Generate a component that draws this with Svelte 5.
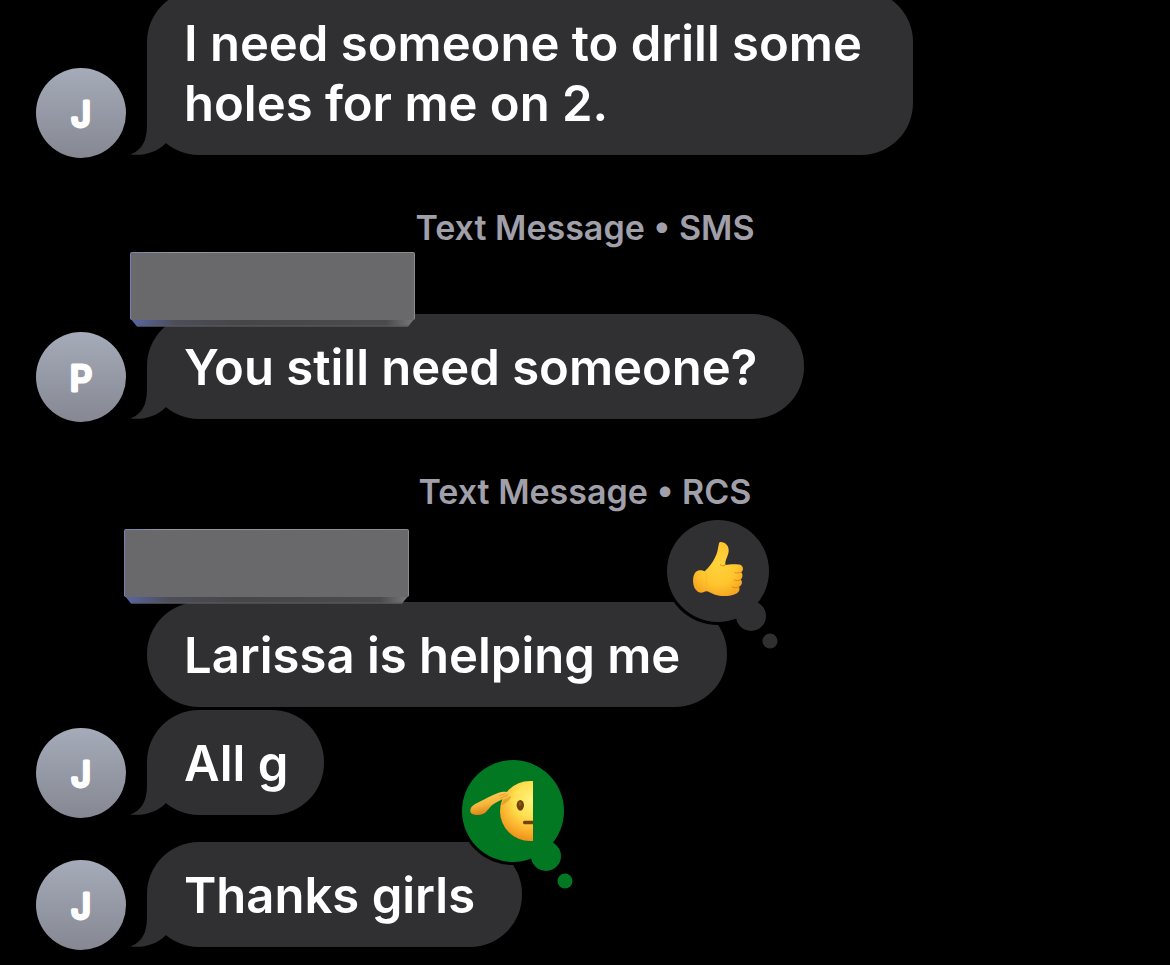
<script lang="ts">
    type Reaction = 'like' | 'salute';
    type Message = {
        text: string;
        initial?: string;
        channel?: string;
        hidden?: 'near' | 'far';
        reaction?: Reaction;
        follows?: boolean;
        short?: boolean;
    };

    const messages: Message[] = [
        { text: "I need someone to drill some holes for me on 2.", initial: "J" },
        { text: "You still need someone?", initial: "P", channel: "SMS", hidden: "near" },
        { text: "Larissa is helping me", channel: "RCS", hidden: "far", reaction: "like" },
        { text: "All g", initial: "J", follows: true, short: true },
        { text: "Thanks girls", initial: "J", reaction: "salute" },
    ];
</script>

<main>
    {#each messages as message}
    {#if message.channel}
    <h2>Text Message • {message.channel}</h2>
    {/if}
    {#if message.hidden}
    <div class="sender {message.hidden}">
        <svg class="block" width="286" height="76" viewBox="0 0 286 76" aria-hidden="true">
            <defs>
                <linearGradient id="bevel-{message.hidden}">
                    <stop offset="0" stop-color="#5967a8" />
                    <stop offset=".16" stop-color="#4c4d58" />
                    <stop offset=".4" stop-color="#464648" />
                    <stop offset=".9" stop-color="#4b4b4d" />
                    <stop offset="1" stop-color="#7a7a7c" />
                </linearGradient>
                <linearGradient id="edge-{message.hidden}">
                    <stop offset="0" stop-color="#7681b6" />
                    <stop offset=".15" stop-color="#99999c" />
                    <stop offset="1" stop-color="#8b8b8d" />
                </linearGradient>
            </defs>
            <path d="M0 66H285L278 74.500H7Z" fill="url(#bevel-{message.hidden})" />
            <rect x="0" y="0" width="285" height="68" rx="2" fill="url(#edge-{message.hidden})" />
            <rect x="1" y="1" width="283" height="67" rx="1" fill="#69696b" />
            <path d="M7 74H278" stroke="#5c5c60" stroke-width="1" />
        </svg>
    </div>
    {/if}
    <div class="row" class:follows={message.follows}>
        <div class="who">
            {#if message.initial}
            <svg class="avatar" width="90" height="90" viewBox="0 0 90 90">
                <defs>
                    <linearGradient id="avatar" x2="0" y2="1">
                        <stop offset="0" stop-color="#a6abb9" />
                        <stop offset="1" stop-color="#858892" />
                    </linearGradient>
                </defs>
                <circle cx="45" cy="45" r="45" fill="url(#avatar)" />
                <text x="45" y="59" text-anchor="middle">{message.initial}</text>
            </svg>
            {/if}
        </div>
        <div class="bubble" class:short={message.short}>
            {#if message.initial}
            <svg class="tail" width="70" height="50" viewBox="0 0 70 50" aria-hidden="true">
                <path d="M17 0V20C17 37 11 46 0 49.5C13 51 26 48 36 38L70 30V0Z" />
            </svg>
            {/if}
            <p>{message.text}</p>
            {#if message.reaction}
            <svg class="reaction {message.reaction}" width="124" height="140" viewBox="0 0 124 140" role="img" aria-label={message.reaction}>
                <circle class="ring" cx="59" cy="56" r="54" />
                <circle cx="59" cy="56" r="51" />
                <circle cx="92" cy="101" r="15" />
                <circle cx="111" cy="126" r="7.5" />
                {#if message.reaction === 'like'}
                <g transform="translate(-10 -5) scale(.3333)">
                    <defs>
                        <radialGradient id="hand" cx=".5" cy=".4" r=".65">
                            <stop offset="0" stop-color="#ffd43c" />
                            <stop offset=".6" stop-color="#ffc52e" />
                            <stop offset="1" stop-color="#f6a21f" />
                        </radialGradient>
                    </defs>
                    <path fill="url(#hand)" d="M214 96C228 95 241 107 239 124C238 138 228 150 229 165C240 163 268 162 275 165C285 170 283 184 276 187C283 192 281 205 275 209C282 214 279 226 270 230C274 238 270 248 261 251C245 260 215 260 198 254C185 250 178 243 170 244C160 250 150 249 144 243C130 232 128 200 140 186C148 178 160 180 167 184C180 172 190 160 197 145C206 128 206 118 209 105C210 99 211 96 214 96Z" />
                    <path fill="none" stroke="#e18a1a" stroke-width="3" stroke-linecap="round" d="M276 187C270 190 264 189 258 188M275 209C268 213 262 212 256 210M270 230C263 235 257 234 250 231M229 165C223 169 219 168 214 164" />
                    <path fill="none" stroke="#eb951f" stroke-width="3" opacity=".2" d="M167 184C175 198 175 228 170 244" />
                </g>
                {:else}
                <g transform="translate(-8 -5) scale(.3333)">
                    <defs>
                        <radialGradient id="face" gradientUnits="userSpaceOnUse" cx="256" cy="150" r="128">
                            <stop offset="0" stop-color="#fff27a" />
                            <stop offset=".4" stop-color="#ffe052" />
                            <stop offset=".7" stop-color="#fbb62f" />
                            <stop offset="1" stop-color="#ed8a18" />
                        </radialGradient>
                        <linearGradient id="arm" x2=".3" y2="1">
                            <stop offset="0" stop-color="#ffd65a" />
                            <stop offset=".6" stop-color="#f5b53b" />
                            <stop offset="1" stop-color="#dc8117" />
                        </linearGradient>
                    </defs>
                    <path fill="url(#face)" d="M261 93H252A90 90 0 0 0 252 273H261Z" />
                    <path fill="#b56a1e" opacity=".35" d="M172 150L194 137C198 145 184 158 167 166Z" />
                    <ellipse cx="223" cy="166" rx="11" ry="16" fill="#714208" />
                    <ellipse cx="222" cy="161" rx="4" ry="6" fill="#8b5918" />
                    <path fill="#714208" d="M235 212H261V223H235Q231 223 231 217.500Q231 212 235 212Z" />
                    <path fill="url(#arm)" d="M73 183C73 170 84 163 99 156C117 148 137 135 156 129C167 125 183 124 189 128C193 131 191 136 185 139C176 146 163 151 152 157C137 164 130 175 122 184C113 195 99 196 86 194C78 193 73 190 73 183Z" />
                    <path fill="none" stroke="#d88b25" stroke-width="2" stroke-linecap="round" d="M160 137L178 131M164 144L185 135" />
                </g>
                {/if}
            </svg>
            {/if}
        </div>
    </div>
    {/each}
</main>

<style>
    :global(body) {
        margin: 0;
        background-color: #000;
    }
    main {
        display: flow-root;
        overflow: hidden;
        padding: 0 36px 18px;
        background-color: #000;
        color: #fff;
        font-family: Inter, "Liberation Sans", sans-serif;
    }
    h2 {
        margin: 53px 0 0;
        font-size: 34px;
        line-height: 40px;
        font-weight: 600;
        text-align: center;
        color: #a1a0aa;
    }
    .sender {
        position: relative;
        z-index: 1;
        height: 66px;
    }
    .sender.far {
        height: 90px;
    }
    .block {
        position: absolute;
        left: 94px;
        top: 4px;
    }
    .far .block {
        left: 88px;
        top: 17px;
    }
    .row {
        display: flex;
        align-items: flex-end;
        gap: 21px;
    }
    .row:first-child {
        margin-top: -10px;
    }
    .row + .row {
        margin-top: 27px;
    }
    .row + .row.follows {
        margin-top: 3px;
    }
    .who {
        flex: none;
        width: 90px;
        margin-bottom: -3px;
    }
    .avatar {
        display: block;
    }
    .avatar text {
        font-size: 35px;
        font-weight: 500;
        fill: #fff;
        stroke: #fff;
        stroke-width: 3px;
        stroke-linejoin: round;
    }
    .bubble {
        position: relative;
        box-sizing: border-box;
        max-width: 766px;
        padding: 24px 47px 21px 37px;
        border-radius: 52px;
        background-color: #303032;
    }
    .bubble.short {
        padding-right: 36px;
    }
    .bubble p {
        position: relative;
        margin: 0;
        font-size: 49px;
        line-height: 60px;
        font-weight: 600;
    }
    .tail {
        position: absolute;
        left: -17px;
        bottom: 0;
        fill: #303032;
    }
    .reaction {
        position: absolute;
        top: -87px;
        right: -56px;
        fill: #303032;
    }
    .reaction.salute {
        fill: #037822;
    }
    .reaction .ring {
        fill: #000;
    }
</style>
